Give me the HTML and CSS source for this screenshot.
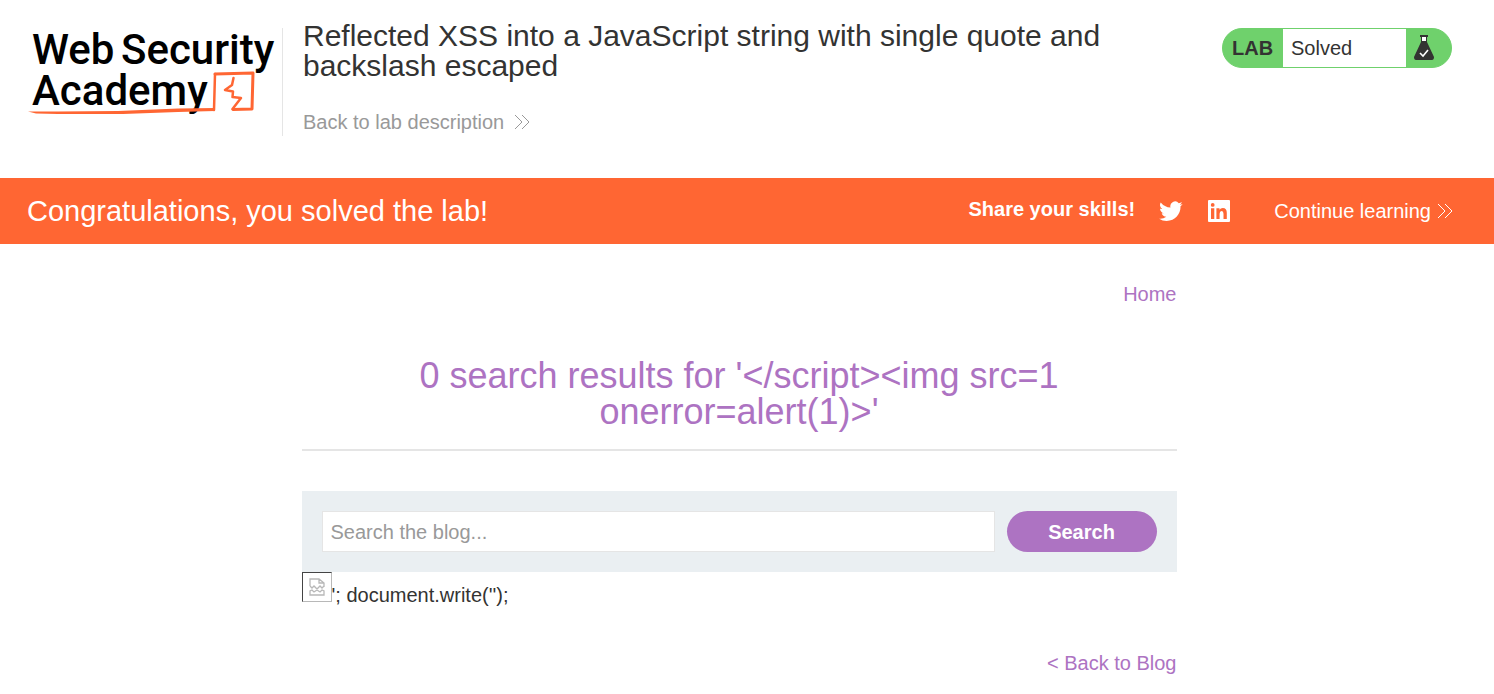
FILE: index.html
```html
<!DOCTYPE html>
<html lang="en">
<head>
<meta charset="utf-8">
<title>Reflected XSS into a JavaScript string with single quote and backslash escaped</title>
<link rel="stylesheet" href="styles.css">
</head>
<body>
<header class="lab-header">
  <a class="logo" href="#" aria-label="Web Security Academy">
    <svg width="254" height="100" viewBox="0 0 254 100">
      <g class="logo-text">
        <text x="4" y="44">Web</text>
        <text x="93" y="44">Security</text>
        <text x="4" y="85">Academy</text>
      </g>
      <g fill="none" stroke="#ff6633" stroke-linejoin="round" stroke-linecap="round">
        <path stroke-width="2.500" d="M186 90L187 54"/>
        <path stroke-width="3" d="M187 54L225 53L224 89L205 89.500"/>
        <path stroke-width="2.500" d="M205.500 58L204 65L197 70L205 71.500L204.500 77L213 78L204.500 89"/>
      </g>
      <path fill="#ff6633" d="M0 91.500L30 91.500L90 91L150 88.500L187 88V91L150 92L95 94L30 94L8 93.500Z"/>
    </svg>
  </a>
  <div class="title">
    <h2>Reflected XSS into a JavaScript string with single quote and backslash escaped</h2>
    <a class="lab-link" href="#">Back to lab description
      <svg class="chevrons" width="16" height="16" viewBox="0 0 16 16"><path d="M1 1L8 8L1 15M8 1L15 8L8 15"/></svg>
    </a>
  </div>
  <div class="status">
    <span class="status-lab">LAB</span>
    <p class="status-text">Solved</p>
    <svg class="flask" width="20" height="26" viewBox="0 0 20 26">
      <path fill="#333332" d="M6 0H14V2H13V7L20 22Q20 25 18 25H2Q0 25 0 22L7 7V2H6Z"/>
      <path fill="#fff" d="M8 2H12V6H8Z"/>
      <path fill="none" stroke="#fff" stroke-width="1.600" d="M6 18L9 21L14 15"/>
    </svg>
  </div>
</header>
<section class="banner">
  <h4>Congratulations, you solved the lab!</h4>
  <div class="share">
    <span class="share-label">Share your skills!</span>
    <a href="#" aria-label="Share on Twitter"><svg width="24" height="24" viewBox="0 0 24 24"><path fill="#fff" d="M23.6 4.9a9.7 9.7 0 0 1-2.8.8 4.9 4.9 0 0 0 2.1-2.7 9.6 9.6 0 0 1-3.1 1.2 4.8 4.8 0 0 0-8.3 4.4A13.8 13.8 0 0 1 1.700 3.500a4.800 4.800 0 0 0 1.500 6.500 4.900 4.900 0 0 1-2.200-.6c0 2.300 1.600 4.400 3.900 4.800-.7.200-1.500.2-2.200.1a4.900 4.900 0 0 0 4.600 3.400A9.900 9.900 0 0 1 .1 19.700a13.900 13.900 0 0 0 7.500 2.200c9.100 0 14.300-7.700 13.900-14.600a10 10 0 0 0 2.100-2.400z"/></svg></a>
    <a href="#" aria-label="Share on LinkedIn"><svg width="24" height="24" viewBox="0 0 24 24"><path fill="#fff" fill-rule="evenodd" d="M2 1H22Q23 1 23 2V22Q23 23 22 23H2Q1 23 1 22V2Q1 1 2 1ZM4 9.300V20H7.300V9.300ZM5.700 4A1.900 1.900 0 1 0 5.700 7.800A1.900 1.900 0 1 0 5.700 4ZM9.400 9.300V20H12.600V14.700Q12.600 12 14.600 12Q16.500 12 16.500 14.800V20H19.800V14.100Q19.800 9 15.800 9Q13.500 9 12.500 10.800V9.300Z"/></svg></a>
    <a class="continue" href="#">Continue learning
      <svg class="chevrons" width="16" height="16" viewBox="0 0 16 16"><path d="M1 1L8 8L1 15M8 1L15 8L8 15"/></svg>
    </a>
  </div>
</section>
<main class="page">
  <div class="content">
    <nav class="top-links"><a href="#">Home</a></nav>
    <h1>0 search results for '&lt;/script&gt;&lt;img src=1 onerror=alert(1)&gt;'</h1>
    <hr>
    <form class="search">
      <input type="text" placeholder="Search the blog..." aria-label="Search the blog">
      <button type="button">Search</button>
    </form>
    <div class="output"><span class="broken"><svg width="16" height="18" viewBox="0 0 16 18" fill="none" stroke="#b8b8b8" stroke-width="1.300"><path d="M1 8V1H10L15 5V9M10 1V5H15M1 8L3 10L5 8L8 11L11 8L13 10L15 8M1 17V13L3 12L5 14L8 12L11 14L13 12L15 13V17Z"/></svg></span>'; document.write('');</div>
    <div class="back"><a href="#">&lt; Back to Blog</a></div>
  </div>
</main>
</body>
</html>
```
FILE: styles.css
```css
* { box-sizing: border-box; }
body {
  margin: 0;
  background: #fff;
  color: #333332;
  font: 20px/24px "Liberation Sans", Arial, sans-serif;
}
a { text-decoration: none; }
svg { flex: none; }
h1, h2, h4, p { margin: 0; font-weight: 400; }

.lab-header {
  display: flex;
  align-items: flex-start;
  min-height: 178px;
  padding: 20px 42px 42px 28px;
}
.logo { display: flex; }
.logo-text { font: 500 42px Roboto, sans-serif; fill: #000; }
.title {
  flex: 1;
  max-width: 880px;
  min-height: 108px;
  margin-top: 8px;
  padding: 0 40px 0 20px;
  border-left: 1px solid #e5e5e5;
}
.title h2 { margin-top: -7px; font-size: 30px; line-height: 30px; }
.lab-link {
  display: inline-flex;
  align-items: center;
  gap: 10px;
  margin-top: 29px;
  color: #999;
}
.chevrons { fill: none; stroke: currentColor; stroke-width: 1; }

.status {
  display: flex;
  align-items: center;
  width: 230px;
  height: 40px;
  margin: 8px 0 0 auto;
  border: 1px solid #6fd16c;
  border-radius: 20px;
  background: #6fd16c;
}
.status-lab { width: 60px; padding-left: 9px; font-weight: 700; }
.status-text {
  width: 123px;
  height: 38px;
  padding-left: 8px;
  background: #fff;
  line-height: 38px;
}
.flask { margin-left: 8px; }

.banner {
  display: flex;
  align-items: center;
  justify-content: space-between;
  min-height: 66px;
  padding: 0 41px 0 27px;
  background: #ff6633;
  color: #fff;
}
.banner h4 { font-size: 29px; line-height: 34px; }
.share { display: flex; align-items: center; gap: 24px; }
.share a { display: flex; color: #fff; }
.share-label { padding-bottom: 4px; font-weight: 700; }
.share .continue { align-items: center; gap: 6px; margin-left: 19px; }

.page { padding: 0 36px 0 20px; }
.content { max-width: 875px; margin: 0 auto; }
.content a { color: #ad73c2; }
.top-links { padding-top: 38px; text-align: right; }
h1 {
  padding: 52px 60px 0;
  color: #ad73c2;
  font-size: 36px;
  line-height: 36px;
  text-align: center;
}
hr { margin: 19px 0 40px; border: 0; border-top: 2px solid #e5e5e5; }
.search {
  display: flex;
  gap: 12px;
  padding: 20px;
  background: #eaeff2;
}
.search input {
  flex: 1;
  min-width: 0;
  height: 41px;
  padding: 1px 8px 0;
  border: 1px solid #e5e5e5;
  background: #fff;
  font: inherit;
}
.search input::placeholder { color: #999; }
.search button {
  width: 150px;
  height: 41px;
  border: 0;
  border-radius: 21px;
  background: #ad73c2;
  color: #fff;
  font: inherit;
  font-weight: 700;
}
.broken {
  display: inline-block;
  width: 30px;
  height: 30px;
  padding: 5px 6px;
  border: 1px solid;
  border-color: #444 #b8b8b8 #b8b8b8 #444;
  vertical-align: baseline;
}
.broken svg { display: block; }
.output { display: flex; align-items: last baseline; }
.output .broken { align-self: flex-start; }
.output { padding-bottom: 5px; align-items: flex-end; line-height: 14px; }
.back { margin-top: 44px; text-align: right; }
```
